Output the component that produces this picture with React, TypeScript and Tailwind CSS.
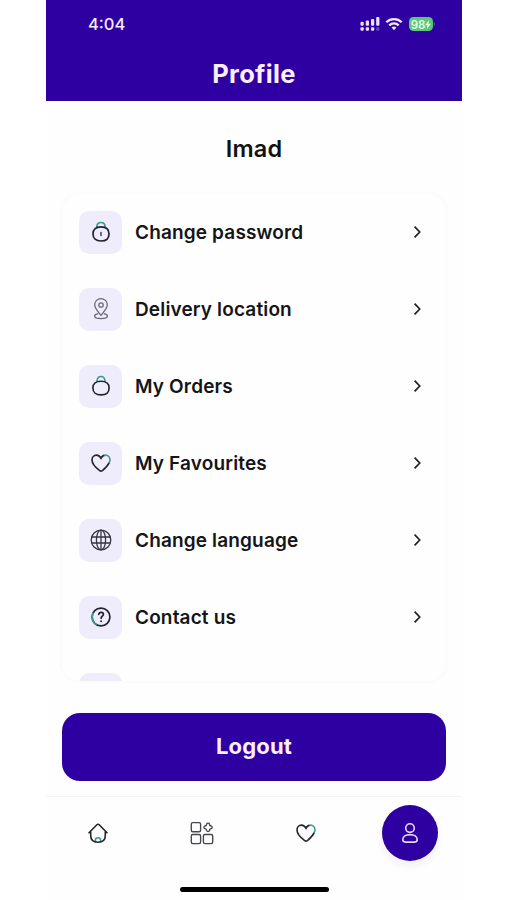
import type { ReactNode } from 'react';

interface MenuItem {
  id: string;
  label: string;
  icon: ReactNode;
}

const TEAL = '#3f9a92';
const INK = '#23222e';

function LockIcon() {
  return (
    <svg width="24" height="24" viewBox="0 0 24 24" fill="none" strokeWidth="1.700" strokeLinecap="round">
      <path d="M7.700 7.200c.2-3 1.800-4.700 4.300-4.700s4.100 1.700 4.300 4.700" stroke={TEAL} />
      <path d="M12 6.900c5 0 8 2.300 8 7s-3 7.100-8 7.100-8-2.400-8-7.100 3-7 8-7z" stroke={INK} />
      <path d="M12 12.500v2.800" stroke="#55546a" />
    </svg>
  );
}

function PinIcon() {
  return (
    <svg width="24" height="24" viewBox="0 0 24 24" fill="none" stroke="#6d6b78" strokeWidth="1.300">
      <path d="M12 18.400C9.500 14.900 5.700 11.400 5.700 7.700a6.300 6.100 0 0 1 12.600 0c0 3.700-3.800 7.200-6.300 10.700z" />
      <circle cx="12" cy="8" r="2.200" />
      <path d="M9.300 16.700c-2.200.3-3.700 1.100-3.700 2.300 0 1.600 2.900 2.600 6.400 2.600s6.400-1 6.400-2.600c0-1.200-1.500-2-3.700-2.300" />
    </svg>
  );
}

function BagIcon() {
  return (
    <svg width="24" height="24" viewBox="0 0 24 24" fill="none" strokeWidth="1.600">
      <path d="M8 7.300c.1-3 1.500-4.800 4-4.800s3.900 1.800 4 4.800" stroke={TEAL} />
      <path d="M12 7.200c5 0 8.100 2.200 8.100 6.700s-3.100 7-8.100 7-8.100-2.500-8.100-7S7 7.200 12 7.200z" stroke={INK} />
    </svg>
  );
}

function HeartIcon() {
  return (
    <svg width="24" height="24" viewBox="0 0 24 24" fill="none" strokeWidth="1.600" strokeLinecap="round">
      <path d="M12 7.200c1-1.900 2.500-3.100 4.500-3.100 2.600 0 4.500 2.200 4.500 5 0 1-.4 2.100-1.200 3.300" stroke={TEAL} />
      <path
        d="M19.800 12.400c-1.600 3.200-4.600 5.700-6.500 7.300-.8.600-1.800.6-2.600 0C8 17.700 3 13.300 3 9.100c0-2.800 1.900-5 4.500-5 2 0 3.500 1.200 4.500 3.100.6-1.200 1.400-2.200 2.500-2.700"
        stroke={INK}
      />
    </svg>
  );
}

function GlobeIcon() {
  return (
    <svg width="24" height="24" viewBox="0 0 24 24" fill="none" stroke="#353440" strokeWidth="1.300">
      <circle cx="12" cy="12" r="9.800" />
      <ellipse cx="12" cy="12" rx="4.600" ry="9.800" />
      <path d="M12 2.200v19.600M2.800 9h18.400M2.800 15h18.400" />
    </svg>
  );
}

function HelpIcon() {
  return (
    <svg width="24" height="24" viewBox="0 0 24 24" fill="none" strokeWidth="1.700" strokeLinecap="round">
      <circle cx="12" cy="12" r="8.900" stroke={INK} />
      <path d="M7 19.400A8.900 8.900 0 0 1 3.900 8.400" stroke={TEAL} />
      <path d="M9.800 9.400c.2-1.400 1-2.100 2.300-2.100 1.400 0 2.300.8 2.300 2 0 1.800-2.300 1.900-2.300 3.900" stroke={INK} />
      <path d="M12.100 16.200v.1" stroke={INK} strokeWidth="1.900" />
    </svg>
  );
}

function HomeIcon() {
  return (
    <svg width="24" height="24" viewBox="0 0 24 24" fill="none" strokeWidth="1.600" strokeLinecap="round" strokeLinejoin="round">
      <path d="M9.400 20.700v-1.400c0-1.600 1-2.500 2.600-2.500s2.600.9 2.600 2.500v1.400" stroke={TEAL} />
      <path d="M3 11.800l7.900-8c.7-.7 1.600-.7 2.300 0l7.800 8" stroke={INK} />
      <path d="M4.700 11v3.500c0 4.500 2.500 6.700 7.300 6.700s7.300-2.200 7.300-6.700V11" stroke={INK} />
    </svg>
  );
}

function CategoriesIcon() {
  return (
    <svg width="24" height="24" viewBox="0 0 24 24" fill="none" stroke="#45454a" strokeWidth="1.350" strokeLinejoin="round">
      <rect x="1.300" y="1.600" width="9.300" height="9.100" rx="1.500" />
      <rect x="1.300" y="13.500" width="9.300" height="9.100" rx="1.500" />
      <rect x="13.400" y="13.500" width="9.300" height="9.100" rx="1.500" />
      <path d="M16.700 3.100a1.500 1.500 0 0 1 2.800 0l.4 1.400 1.400.5a1.500 1.500 0 0 1 0 2.700l-1.400.5-.4 1.400a1.500 1.500 0 0 1-2.800 0l-.5-1.400-1.400-.5a1.500 1.500 0 0 1 0-2.700l1.400-.5z" />
    </svg>
  );
}

function UserIcon() {
  return (
    <svg width="24" height="24" viewBox="0 0 24 24" fill="none" stroke="#ead8ff" strokeWidth="1.600">
      <circle cx="12" cy="7.100" r="4.300" />
      <path d="M12 13.600c4.300 0 7.200 2 7.200 5 0 1.600-.9 2.500-2.500 2.500H7.300c-1.600 0-2.500-.9-2.500-2.500 0-3 2.900-5 7.200-5z" />
    </svg>
  );
}

function ChevronIcon() {
  return (
    <svg width="10" height="14" viewBox="0 0 10 14" fill="none" stroke="#202124" strokeWidth="1.700">
      <path d="M2.600 1.700L7.700 7l-5.100 5.300" />
    </svg>
  );
}

function StatusIcons() {
  return (
    <div className="flex items-center">
      {/* Dual SIM signal */}
      <svg width="20" height="16" viewBox="0 0 20 16" fill="#f0e0ff">
        <rect x="0.500" y="5.700" width="3.200" height="4" rx="1" />
        <rect x="5.800" y="4.500" width="3.200" height="5.200" rx="1" />
        <rect x="11" y="3" width="3.200" height="6.700" rx="1" />
        <rect x="16.200" y="1" width="3.200" height="8.700" rx="1" />
        <rect x="0.500" y="11.300" width="3.200" height="3.400" rx="1" />
        <rect x="5.800" y="11.300" width="3.200" height="3.400" rx="1" />
        <rect x="11" y="11.300" width="3.200" height="3.400" rx="1" />
        <rect x="16.200" y="11.300" width="3.200" height="3.400" rx="1" fill="#6540c8" />
      </svg>
      <svg className="ml-[5px]" width="18" height="14" viewBox="0 0 18 14" fill="none" stroke="#f4e8ff" strokeWidth="2.300">
        <path d="M1.300 5.300a11 11 0 0 1 15.400 0" />
        <path d="M4.300 8.400a6.700 6.700 0 0 1 9.400 0" />
        <path d="M9 13.200l-2.400-2.600a3.400 3.400 0 0 1 4.800 0z" fill="#f4e8ff" stroke="none" />
      </svg>
      <div className="ml-[6px] flex h-[14px] w-6 items-center justify-center rounded-[4.500px] bg-[#58c978] text-[11.500px] font-semibold text-[#e7fbe9]">
        <span className="pt-px leading-[14px] tracking-[-0.200px]">98</span>
        <svg width="6" height="9" viewBox="0 0 6 9" fill="#effff0">
          <path d="M4 0L0 5.200h2.400L1.800 9 6 3.700H3.400z" />
        </svg>
      </div>
      <span className="ml-px h-1 w-px rounded-r bg-[#4b4bb0]" />
    </div>
  );
}

const menuItems: MenuItem[] = [
  { id: 'password', label: 'Change password', icon: <LockIcon /> },
  { id: 'location', label: 'Delivery location', icon: <PinIcon /> },
  { id: 'orders', label: 'My Orders', icon: <BagIcon /> },
  { id: 'favourites', label: 'My Favourites', icon: <HeartIcon /> },
  { id: 'language', label: 'Change language', icon: <GlobeIcon /> },
  { id: 'contact', label: 'Contact us', icon: <HelpIcon /> },
];

export default function App() {
  return (
    <div className="flex h-[900px] w-[507px] overflow-hidden bg-white pl-[46px] font-['Inter','Liberation_Sans',sans-serif]">
      <div className="flex w-[416px] flex-col bg-[#fefefe]">
        {/* Header */}
        <header className="h-[100.500px] shrink-0 bg-[#2f00a1]">
          <div className="flex h-12 items-center justify-between pl-[42px] pr-[27px]">
            <span className="text-[16.500px] font-medium text-[#f6ebff]">4:04</span>
            <StatusIcons />
          </div>
          <h1 className="pt-2 text-center text-[25.500px] font-bold leading-9 tracking-[0.300px] text-[#fbefff]">Profile</h1>
        </header>

        <h2 className="mt-[32px] text-center text-[23.500px] font-semibold leading-8 tracking-[0.200px] text-[#111214]">Imad</h2>

        {/* Menu card */}
        <div className="mx-4 mt-[29.500px] h-[487px] shrink-0 overflow-hidden rounded-[18px] bg-[#fefefe] px-[17px] pt-[17px] shadow-[0_0_3px_2px_#fbfbfb]">
          {menuItems.map((item) => (
            <button key={item.id} className="mb-[34px] flex h-[43px] w-full items-center text-left">
              <span className="flex h-[43px] w-[43px] items-center justify-center rounded-[10px] bg-[#efedfb] pb-px">{item.icon}</span>
              <span className="ml-[13px] flex-1 pt-[2px] text-[19px] font-semibold tracking-[0.150px] text-[#151518]">{item.label}</span>
              <span className="mr-[7px] pb-px">
                <ChevronIcon />
              </span>
            </button>
          ))}
          <span className="block h-[43px] w-[43px] rounded-[10px] bg-[#efedfb]" />
        </div>

        <button className="mx-4 mt-[31.500px] h-[68px] shrink-0 rounded-[18px] bg-[#2f00a1] text-[22px] font-bold tracking-[0.150px] text-[#fbefff]">
          Logout
        </button>

        {/* Bottom navigation */}
        <nav className="mt-[15.500px] grid h-[72px] shrink-0 grid-cols-4 items-center border-t border-[#f3f3f3]">
          <div className="flex justify-center">
            <HomeIcon />
          </div>
          <div className="flex justify-center">
            <CategoriesIcon />
          </div>
          <div className="flex justify-center">
            <HeartIcon />
          </div>
          <div className="flex justify-center">
            <span className="flex h-14 w-14 items-center justify-center rounded-full bg-[#2f00a1] shadow-[0_5px_8px_rgba(0,0,0,0.060)]">
              <UserIcon />
            </span>
          </div>
        </nav>
        <div className="mx-auto mt-[19px] h-[5px] w-[149px] rounded-full bg-black" />
      </div>
    </div>
  );
}
